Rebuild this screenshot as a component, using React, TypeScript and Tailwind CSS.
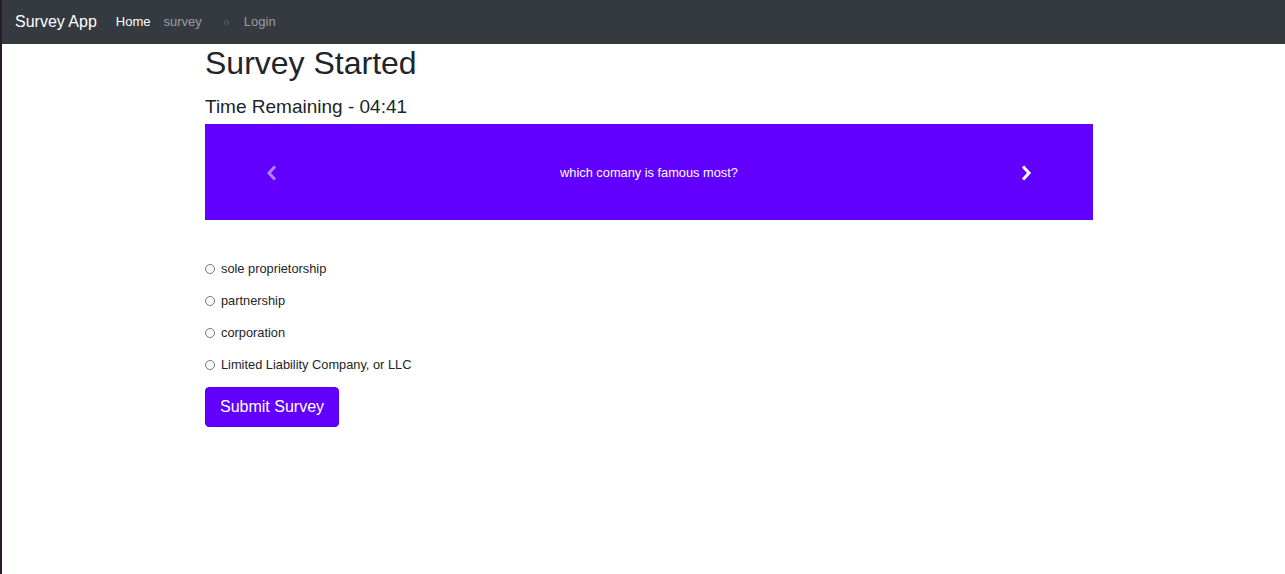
import React from "react";

const options = [
  "sole proprietorship",
  "partnership",
  "corporation",
  "Limited Liability Company, or LLC",
];

export default function App() {
  return (
    <div className="min-h-[574px] bg-white border-l-2 border-[#2b1a2a] font-['Liberation_Sans',Arial,sans-serif] text-[#212529]">
      <nav className="h-[44px] bg-[#343a40] flex items-center pl-[13px] text-[13px]">
        <span className="text-white text-[16px] mr-[19px]">Survey App</span>
        <span className="text-white mr-[13px]">Home</span>
        <span className="text-[#9a9da0] mr-[22px]">survey</span>
        <span className="w-[5px] h-[5px] rounded-full border border-[#5d6166] mr-[15px]"></span>
        <span className="text-[#9a9da0]">Login</span>
      </nav>
      <div className="ml-[203px] w-[888px]">
        <h1 className="text-[32px] leading-[38px]">Survey Started</h1>
        <h3 className="text-[19px] leading-[24px] mt-[13px]">Time Remaining - 04:41</h3>
        <div className="mt-[5px] h-[96px] bg-[#6200ff] flex items-center justify-between pl-[60px] pr-[60px] pt-[2px]">
          <svg width="14" height="18" viewBox="0 0 14 18">
            <path d="M10 2.5 L4 9 L10 15.5" fill="none" stroke="#b285ff" strokeWidth="3" />
          </svg>
          <span className="text-white text-[12.8px]">which comany is famous most?</span>
          <svg width="14" height="18" viewBox="0 0 14 18">
            <path d="M4 2.5 L10 9 L4 15.5" fill="none" stroke="#ffffff" strokeWidth="3" />
          </svg>
        </div>
        <div className="mt-[40px] flex flex-col gap-[14px]">
          {options.map((o) => (
            <label key={o} className="flex items-center h-[18px] text-[12.8px]">
              <span className="w-[10px] h-[10px] rounded-full border border-[#767676] mr-[6px]"></span>
              {o}
            </label>
          ))}
        </div>
        <button className="mt-[13px] h-[40px] px-[14px] bg-[#6200ff] text-white text-[16px] rounded-[4px] border border-[#5a00e6]">
          Submit Survey
        </button>
      </div>
    </div>
  );
}
